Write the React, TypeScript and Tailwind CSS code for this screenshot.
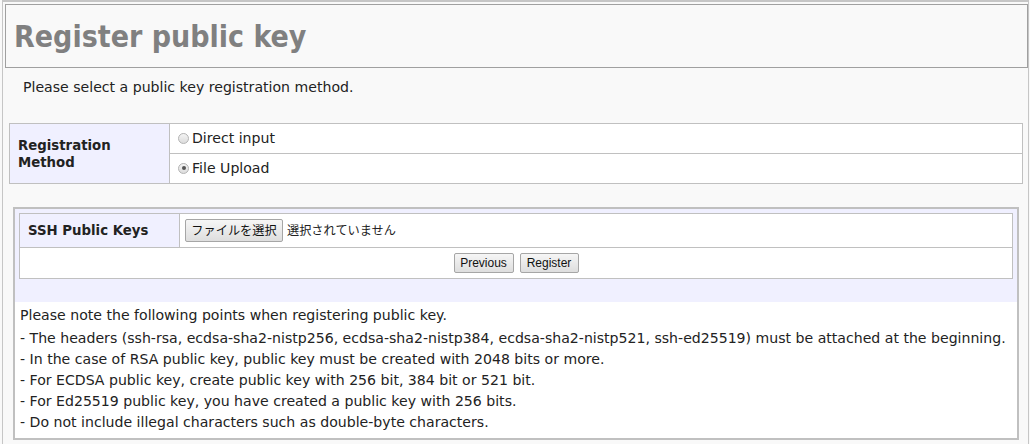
import React from "react";

const FONT = '"DejaVu Sans", "Noto Sans CJK JP", sans-serif';
const TITLE_FONT = '"DejaVu Sans Condensed", "DejaVu Sans", sans-serif';
const JP = '"Noto Sans CJK JP", sans-serif';

function Radio({ checked }: { checked?: boolean }) {
  return (
    <span className="inline-flex items-center justify-center w-[11px] h-[11px] rounded-full border border-[#b4b4b4] bg-gradient-to-b from-[#f4f4f4] to-[#dcdcdc] mr-[3px] shrink-0">
      {checked && <span className="block w-[4px] h-[4px] rounded-full bg-[#555]" />}
    </span>
  );
}

function Btn({ children, className = "" }: { children: React.ReactNode; className?: string }) {
  return (
    <span
      className={`inline-flex items-center justify-center border border-[#a6a6a6] rounded-[2px] bg-gradient-to-b from-[#f6f6f6] to-[#dedede] text-[#111] ${className}`}
    >
      {children}
    </span>
  );
}

export default function App() {
  return (
    <div className="w-[1030px] h-[444px] bg-[#f9f9f9] overflow-hidden text-[14.1px] text-[#222]" style={{ fontFamily: FONT }}>
      <div className="ml-[2px] mr-[1px] h-[460px] border-t-2 border-l border-r border-[#c6c6c6] pl-[2px] pt-[2px]">
        <div className="h-[64px] border border-[#a0a0a0] flex items-center pl-[8px]">
          <h1 className="text-[30px] font-bold text-[#808080] leading-none mt-[1px]" style={{ fontFamily: TITLE_FONT }}>
            Register public key
          </h1>
        </div>
        <p className="pl-[18px] mt-[11px] leading-[17px]">Please select a public key registration method.</p>

        <table className="ml-[4px] mt-[27px] w-[1014px] border-collapse">
          <tbody>
            <tr className="h-[30px]">
              <td rowSpan={2} className="w-[160px] bg-[#f0f0ff] border border-[#c0c0c0] px-[8px] font-bold text-[13.3px] leading-[17px] align-middle">
                Registration
                <br />
                Method
              </td>
              <td className="bg-white border border-[#c0c0c0] pl-[8px] align-middle">
                <span className="flex items-center">
                  <Radio />
                  Direct input
                </span>
              </td>
            </tr>
            <tr className="h-[30px]">
              <td className="bg-white border border-[#c0c0c0] pl-[8px] align-middle">
                <span className="flex items-center">
                  <Radio checked />
                  File Upload
                </span>
              </td>
            </tr>
          </tbody>
        </table>

        <div className="ml-[8px] mt-[23px] w-[1006px] border-2 border-[#c0c0c0] bg-[#f0f0ff]">
          <div className="p-[4px] pb-[23px]">
            <table className="w-full border-collapse">
              <tbody>
                <tr className="h-[34px]">
                  <td className="w-[160px] bg-[#f0f0ff] border border-[#c0c0c0] px-[8px] font-bold text-[13.3px] align-middle">SSH Public Keys</td>
                  <td className="bg-white border border-[#c0c0c0] pl-[5px] align-middle">
                    <span className="flex items-center">
                      <Btn className="h-[23px] w-[98px] text-[12.2px]">
                        <span style={{ fontFamily: JP }}>ファイルを選択</span>
                      </Btn>
                      <span className="ml-[4px] text-[12.2px]" style={{ fontFamily: JP }}>
                        選択されていません
                      </span>
                    </span>
                  </td>
                </tr>
                <tr className="h-[31px]">
                  <td colSpan={2} className="bg-white border border-[#c0c0c0] align-middle">
                    <div className="flex items-center justify-center gap-[6px]" style={{ fontFamily: '"Liberation Sans", Arial, sans-serif' }}>
                      <Btn className="h-[20px] w-[60px] text-[12px]">Previous</Btn>
                      <Btn className="h-[20px] w-[59px] text-[12px]">Register</Btn>
                    </div>
                  </td>
                </tr>
              </tbody>
            </table>
          </div>
          <div className="bg-white pl-[5px] pt-[3px] pb-[5px] leading-[21px]">
            <div className="mb-[2px]">Please note the following points when registering public key.</div>
            <div>- The headers (ssh-rsa, ecdsa-sha2-nistp256, ecdsa-sha2-nistp384, ecdsa-sha2-nistp521, ssh-ed25519) must be attached at the beginning.</div>
            <div>- In the case of RSA public key, public key must be created with 2048 bits or more.</div>
            <div>- For ECDSA public key, create public key with 256 bit, 384 bit or 521 bit.</div>
            <div>- For Ed25519 public key, you have created a public key with 256 bits.</div>
            <div>- Do not include illegal characters such as double-byte characters.</div>
          </div>
        </div>
      </div>
    </div>
  );
}
